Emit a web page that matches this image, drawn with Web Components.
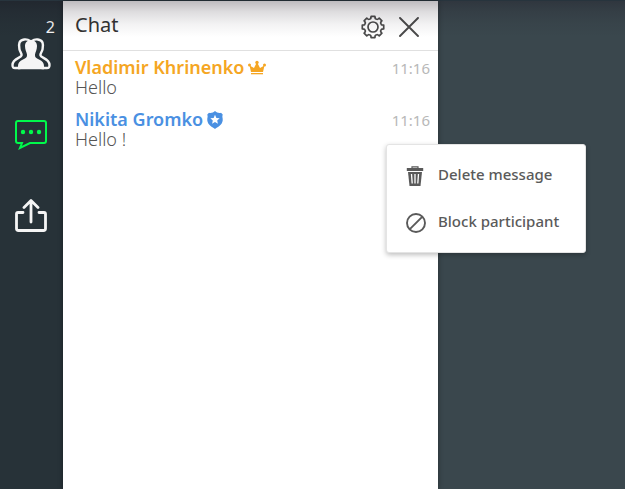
<!DOCTYPE html>
<html lang="en">
<head>
<meta charset="utf-8">
<title>Chat</title>
<style>
  html, body { height: 100%; }
  body { margin: 0; font-family: "Noto Sans", "Open Sans", sans-serif; color: #5a5a5a; }
</style>
</head>
<body>
<room-app>
  <side-rail slot="rail">
    <rail-button label="Participants" icon="people" badge="2"></rail-button>
    <rail-button label="Chat" icon="chat" active></rail-button>
    <rail-button label="Share" icon="share"></rail-button>
  </side-rail>
  <chat-panel heading="Chat">
    <chat-message author="Vladimir Khrinenko" time="11:16" role-icon="crown">Hello</chat-message>
    <chat-message author="Nikita Gromko" time="11:16" role-icon="shield">Hello !
      <context-menu slot="menu">
        <menu-action icon="trash">Delete message</menu-action>
        <menu-action icon="block">Block participant</menu-action>
      </context-menu>
    </chat-message>
  </chat-panel>
</room-app>

<script>
const tooth = '<path d="M-3.500-8.500Q-2.400-7.700-2.100-9L-1.900-10.700H1.900L2.100-9Q2.400-7.700 3.500-8.500"/>';
const gearTeeth = [0, 45, 90, 135, 180, 225, 270, 315].map(a => `<g transform="rotate(${a})">${tooth}</g>`).join('');
const ICONS = {
  people: [40, 34, `<g fill="none" stroke="currentColor" stroke-width="2.400" stroke-linejoin="round" stroke-linecap="round">
      <path d="M19 4C16 1.500 10 2 8.500 5.500C7.500 8 8 10 8.500 12.500C9 15 11 16 10.500 18.500C10 21 1.500 21.500 1.500 28C1.500 30.500 2 31 4 31H9"/>
      <path d="M21 4C24 1.500 30 2 31.500 5.500C32.500 8 32 10 31.500 12.500C31 15 29 16 29.500 18.500C30 21 38.500 21.500 38.500 28C38.500 30.500 38 31 36 31H31"/></g>
      <path fill="currentColor" d="M20 3C23.500 3 26 5.500 26 9C26 12.500 24.500 15 24 17.500C23.700 20 25 21 28 22.500C31.500 24 33 26 33 29V32.300H7V29C7 26 8.500 24 12 22.500C15 21 16.300 20 16 17.500C15.500 15 14 12.500 14 9C14 5.500 16.500 3 20 3Z"/>`],
  chat: [34, 32, `<path fill="none" stroke="currentColor" stroke-width="2" stroke-linejoin="miter" d="M4 2H30Q32 2 32 4V22Q32 24 30 24H16L6 29L8 24H4Q2 24 2 22V4Q2 2 4 2Z"/>
      <g fill="currentColor"><circle cx="9" cy="13" r="2.200"/><circle cx="17" cy="13" r="2.200"/><circle cx="25" cy="13" r="2.200"/></g>`],
  share: [34, 34, `<g fill="none" stroke="currentColor" stroke-width="2.800" stroke-linecap="round" stroke-linejoin="round">
      <path d="M9 13.500H4Q2.500 13.500 2.500 15V29.500Q2.500 31.500 4.500 31.500H29.500Q31.500 31.500 31.500 29.500V15Q31.500 13.500 30 13.500H25"/><path d="M17 23V2M10 8.500L17 1.500L24 8.500"/></g>`],
  gear: [24, 24, `<g transform="translate(12 12)" fill="none" stroke="currentColor" stroke-width="1.700" stroke-linejoin="round">${gearTeeth}<circle r="5"/></g>`],
  close: [20, 20, `<path d="M1 1L19 19M19 1L1 19" stroke="currentColor" stroke-width="1.900" stroke-linecap="round"/>`],
  crown: [18, 16, `<g fill="currentColor"><path d="M3 12L1.500 5.500L6 8L8.500 3H9.500L12 8L16.500 5.500L15 12Z"/><circle cx="1.500" cy="5" r="1.500"/><circle cx="9" cy="2.500" r="1.700"/><circle cx="16.500" cy="5" r="1.500"/><path d="M3 13H15V14.300H3Z"/></g>`],
  shield: [16, 18, `<path fill="currentColor" d="M8 0C9.500 1.500 12 2.300 14 1.700L15.700 3.500C14.800 6 16 7 15.700 9.500C15 14 11.500 15.500 8 18C4.500 15.500 1 14 .3 9.500C0 7 1.200 6 .3 3.500L2 1.700C4 2.300 6.500 1.500 8 0Z"/>
      <path fill="#fff" d="M8 3.800L9.400 6.900L12.700 7.200L10.200 9.500L10.900 12.700L8 11L5.100 12.700L5.800 9.500L3.300 7.200L6.600 6.900Z"/>`],
  trash: [20, 20, `<path fill="none" stroke="currentColor" stroke-width="1.200" d="M6 2.500V.8H12V2.500"/><path fill="currentColor" d="M.8 2H17.200V5H.8Z"/>
      <path fill="currentColor" d="M2 6H16L14.500 20H3.500Z"/><path d="M5.500 8L6.200 17.500M9 8V17.500M12.500 8L11.800 17.500" stroke="#fff" stroke-width="1.300"/>`],
  block: [20, 20, `<g fill="none" stroke="currentColor" stroke-width="1.900"><circle cx="10" cy="10" r="9"/><path d="M3.600 16.400L16.400 3.600"/></g>`]
};
const icon = name => {
  const [w, h, body] = ICONS[name];
  return `<svg width="${w}" height="${h}" viewBox="0 0 ${w} ${h}" aria-hidden="true">${body}</svg>`;
};
const RESET = `:host,*{box-sizing:border-box} svg{display:block;flex:none} button{font:inherit;color:inherit;background:none;border:0;padding:0;margin:0;cursor:pointer}`;

class BaseElement extends HTMLElement {
  connectedCallback() {
    if (!this.shadowRoot) this.attachShadow({ mode: 'open' }).innerHTML = `<style>${RESET}</style>` + this.render();
  }
}

customElements.define('room-app', class extends BaseElement {
  render() {
    return `<style>
      :host{display:grid;grid-template-columns:63px minmax(0,375px) 1fr;min-height:100%;background:#3a474d;position:relative;border-top:1px solid #27343d}
      :host::after{content:"";position:absolute;inset:0 0 auto 0;height:36px;pointer-events:none;
        background:linear-gradient(rgba(20,12,25,.28),rgba(20,12,25,.14) 30%,rgba(20,12,25,.05) 65%,transparent)}
    </style><slot name="rail"></slot><slot></slot>`;
  }
});

customElements.define('side-rail', class extends BaseElement {
  render() {
    return `<style>
      :host{display:block;background:#273238;color:#f5f5f5}
      nav{display:flex;flex-direction:column;align-items:center;gap:47px;padding:36px 1px 0 0}
    </style><nav aria-label="Room"><slot></slot></nav>`;
  }
});

customElements.define('rail-button', class extends BaseElement {
  render() {
    const badge = this.getAttribute('badge');
    return `<style>
      :host{display:block;position:relative}
      :host([active]){color:#00f94b}
      button{display:grid;place-items:center;height:34px}
      .badge{position:absolute;right:-4px;top:-22px;font-size:16px;line-height:24px}
    </style><button type="button" aria-label="${this.getAttribute('label')}">${icon(this.getAttribute('icon'))}</button>
    ${badge ? `<span class="badge">${badge}</span>` : ''}`;
  }
});

customElements.define('chat-panel', class extends BaseElement {
  render() {
    return `<style>
      :host{display:block;background:#fff;box-shadow:0 0 5px rgba(0,0,0,.4)}
      header{display:flex;align-items:center;gap:14px;height:50px;padding:0 19px 2px 12px;border-bottom:1px solid #e0e0e0}
      h1{flex:1;margin:0;font-size:20px;line-height:28px;font-weight:400;color:#333}
      header button{margin-top:4px;color:#4a4a4a}
      section{display:flex;flex-direction:column;gap:12px;padding:6px 8px 0 12px}
    </style><header><h1>${this.getAttribute('heading')}</h1>
      <button type="button" aria-label="Settings">${icon('gear')}</button>
      <button type="button" aria-label="Close">${icon('close')}</button></header>
    <section><slot></slot></section>`;
  }
});

customElements.define('chat-message', class extends BaseElement {
  render() {
    return `<style>
      :host{display:block;position:relative;font-size:18px;line-height:20px}
      .top{display:flex;align-items:center;gap:4px;height:20px;color:#f5a623}
      :host([role-icon=shield]) .top{color:#4a90e2}
      b{font-weight:650}
      svg{margin-top:2px}
      time{margin-left:auto;padding-top:1px;font-size:15px;color:#b8b8b8}
      p{margin:0;font-weight:350;color:#555}
      ::slotted([slot=menu]){position:absolute;left:311px;top:35px;z-index:2}
    </style><div class="top"><b>${this.getAttribute('author')}</b>${icon(this.getAttribute('role-icon'))}<time>${this.getAttribute('time')}</time></div>
    <p><slot></slot></p><slot name="menu"></slot>`;
  }
});

customElements.define('context-menu', class extends BaseElement {
  render() {
    return `<style>
      :host{display:flex;flex-direction:column;gap:23px;width:200px;padding:17px 18px 19px 19px;background:#fff;border:1px solid #e4e4e4;border-radius:3px;box-shadow:0 2px 5px rgba(0,0,0,.25)}
    </style><slot></slot>`;
  }
});

customElements.define('menu-action', class extends BaseElement {
  render() {
    return `<style>
      :host{display:block}
      button{display:flex;align-items:center;gap:12px;white-space:nowrap;font-size:15px;line-height:24px;font-weight:500;color:#5a5a5a}
      svg{margin-top:3px}
    </style><button type="button">${icon(this.getAttribute('icon'))}<span><slot></slot></span></button>`;
  }
});
</script>
</body>
</html>
